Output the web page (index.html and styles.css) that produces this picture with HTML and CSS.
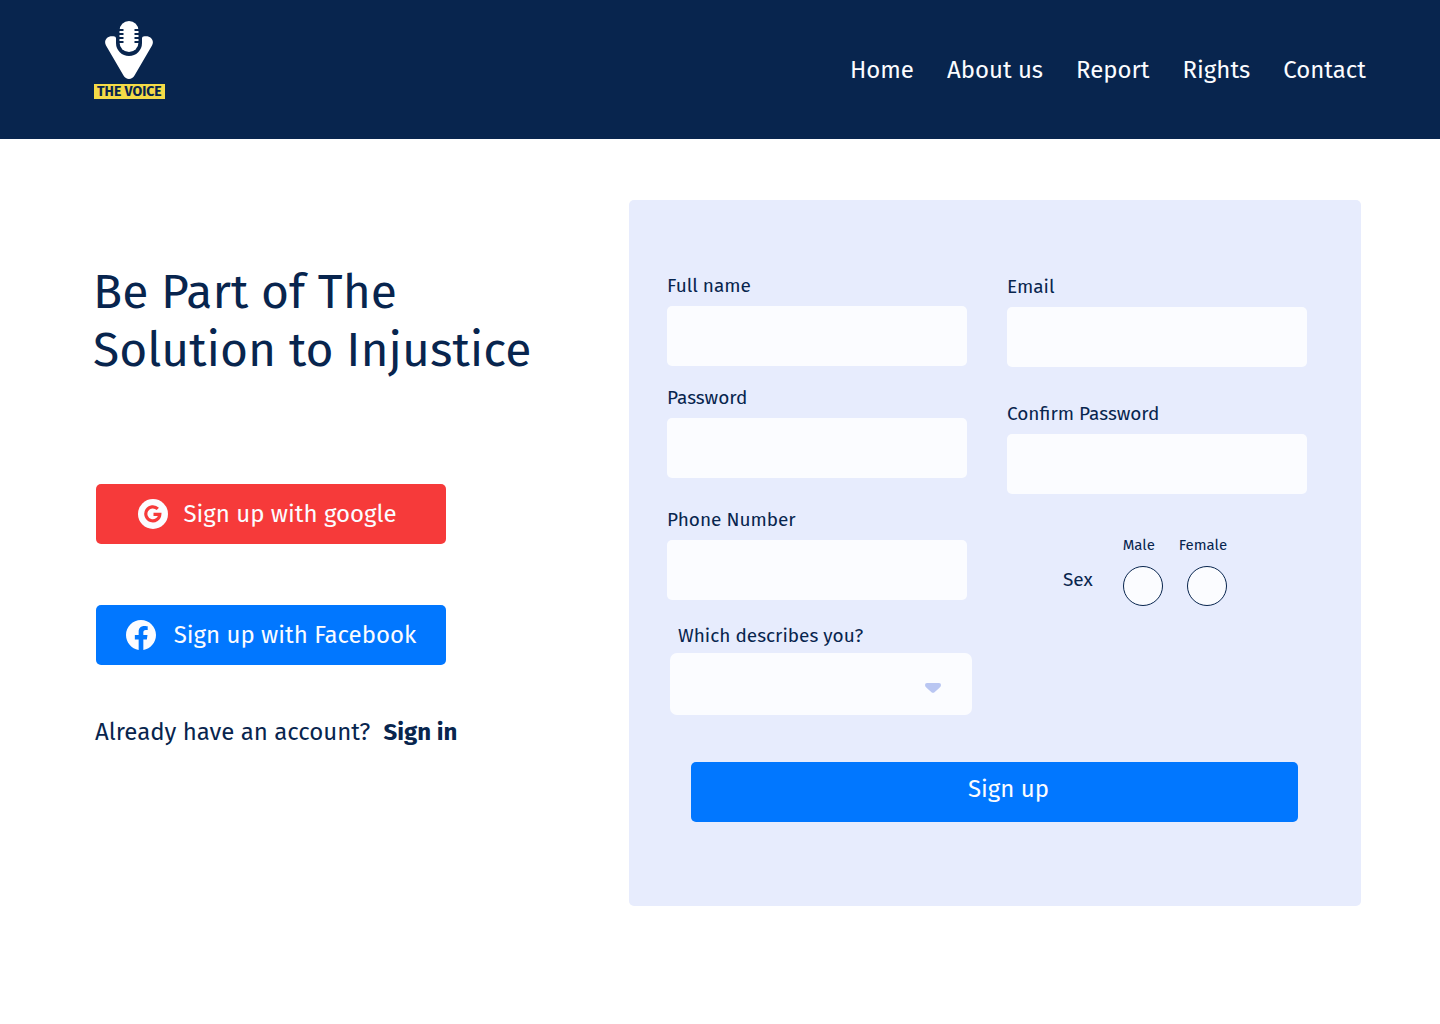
FILE: index.html
```html
<!DOCTYPE html>
<html lang="en">
<head>
<meta charset="utf-8">
<meta name="viewport" content="width=device-width, initial-scale=1">
<title>The Voice – Sign up</title>
<link rel="stylesheet" href="styles.css">
</head>
<body>
<header class="site-header">
  <a class="logo" href="#" aria-label="The Voice">
    <svg class="logo-mark" viewBox="0 0 48 58" aria-hidden="true">
      <path class="logo-white" d="M11 17.500C11 16 10 15.300 8.500 15.300H7C1.500 15.300-1.500 20 1 24.500L18.500 54.500C21 59 27 59 29.500 54.500L47 24.500C49.500 20 46.500 15.300 41 15.300H39.500C38 15.300 37 16 37 17.500V22A13 13 0 0 1 11 22Z"/>
      <rect class="logo-white" x="14.500" y="0" width="19" height="31" rx="9.500"/>
      <path class="logo-line" d="M14 9H18.500M14 13H18.500M14 17H18.500M14 21H18.500M29.500 9H34M29.500 13H34M29.500 17H34M29.500 21H34"/>
    </svg>
    <span class="logo-name">THE VOICE</span>
  </a>
  <nav class="site-nav">
    <a href="#">Home</a>
    <a href="#">About us</a>
    <a href="#">Report</a>
    <a href="#">Rights</a>
    <a href="#">Contact</a>
  </nav>
</header>
<main class="page">
  <section class="intro">
    <h1>Be Part of The<br>Solution to Injustice</h1>
    <div class="social">
      <button class="btn btn-google" type="button">
        <svg class="icon" viewBox="0 0 30 30" aria-hidden="true"><circle cx="15" cy="15" r="15" fill="#fbfcff"/><path d="M19.800 9.900A7 7 0 1 0 21.800 15.300H15.500" fill="none" stroke="#f63a3a" stroke-width="3.200"/></svg>
        Sign up with google
      </button>
      <button class="btn btn-facebook" type="button">
        <svg class="icon" viewBox="0 0 24 24" aria-hidden="true"><path fill="#fbfcff" d="M24 12.073C24 5.405 18.627 0 12 0S0 5.405 0 12.073C0 18.100 4.388 23.094 10.125 24v-8.437H7.078v-3.490h3.047V9.413c0-3.026 1.792-4.697 4.533-4.697 1.312 0 2.686.236 2.686.236v2.971h-1.513c-1.491 0-1.956.930-1.956 1.886v2.264h3.328l-.532 3.490h-2.796V24C19.612 23.094 24 18.100 24 12.073z"/></svg>
        Sign up with Facebook
      </button>
    </div>
    <p class="signin">Already have an account? <a href="#">Sign in</a></p>
  </section>
  <form class="card">
    <div class="columns">
      <div class="column">
        <div class="field"><label for="name">Full name</label><input id="name" type="text"></div>
        <div class="field"><label for="password">Password</label><input id="password" type="password"></div>
        <div class="field field-phone"><label for="phone">Phone Number</label><input id="phone" type="tel"></div>
        <div class="field field-role">
          <label for="role">Which describes you?</label>
          <div class="select">
            <select id="role"><option value=""></option></select>
            <svg class="caret" viewBox="0 0 16 10" aria-hidden="true"><path d="M2 0H14Q16 0 16 2Q16 3.500 14.500 4.800L9.500 9.200Q8 10.400 6.500 9.200L1.500 4.800Q0 3.500 0 2Q0 0 2 0Z" fill="#b9c6f2"/></svg>
          </div>
        </div>
      </div>
      <div class="column column-right">
        <div class="field"><label for="email">Email</label><input id="email" type="email"></div>
        <div class="field"><label for="confirm">Confirm Password</label><input id="confirm" type="password"></div>
        <fieldset class="sex" aria-labelledby="sex-label">
          <span class="sex-label" id="sex-label">Sex</span>
          <label class="choice">Male<input type="radio" name="sex" value="male"></label>
          <label class="choice choice-end">Female<input type="radio" name="sex" value="female"></label>
        </fieldset>
      </div>
    </div>
    <button class="btn btn-submit" type="submit">Sign up</button>
  </form>
</main>
</body>
</html>
```
FILE: styles.css
```css
* { box-sizing: border-box; }
body {
  margin: 0;
  background: #fff;
  color: #08254e;
  font-family: "Fira Sans", "Noto Sans", sans-serif;
  font-size: 19px;
  line-height: 24px;
}
a { color: inherit; text-decoration: none; }
button, input, select { font: inherit; color: inherit; border: 0; margin: 0; }

.site-header {
  display: flex;
  justify-content: space-between;
  align-items: center;
  padding: 21px 74px 40px 94px;
  background: #08254e;
}
.logo { display: flex; flex-direction: column; align-items: center; gap: 5px; }
.logo-mark { width: 48px; height: 58px; }
.logo-white { fill: #fff; }
.logo-line { stroke: #08254e; stroke-width: 2; }
.logo-name {
  padding: 1px 3px 0;
  background: #f4db47;
  color: #08254e;
  font-size: 14px;
  font-weight: 700;
  line-height: 14px;
}
.site-nav {
  display: flex;
  gap: 33px;
  padding-top: 20px;
  color: #fbfcff;
  font-size: 24px;
  line-height: 30px;
}

.page {
  display: grid;
  grid-template-columns: 536fr 732fr;
  align-items: start;
  padding: 61px 79px 80px 93px;
}
.intro { padding-top: 63px; }
h1 { margin: 0; font-size: 48px; font-weight: 400; line-height: 58px; }
.social { display: flex; flex-direction: column; gap: 61px; max-width: 350px; margin: 105px 0 0 3px; }
.btn {
  display: flex;
  align-items: center;
  justify-content: center;
  gap: 16px;
  height: 60px;
  padding: 0 10px;
  border-radius: 5px;
  color: #fbfcff;
  font-size: 24px;
  line-height: 30px;
  cursor: pointer;
}
.btn-google { padding-right: 18px; background: #f63a3a; }
.btn-facebook { gap: 18px; background: #0177ff; }
.icon { width: 30px; height: 30px; flex: none; }
.signin { margin: 52px 0 0 2px; font-size: 24px; line-height: 30px; }
.signin a { margin-left: 7px; font-weight: 700; }

.card { padding: 74px 54px 84px 38px; border-radius: 5px; background: #e7ecfd; }
.columns { display: grid; grid-template-columns: 1fr 1fr; gap: 40px; }
.column { display: flex; flex-direction: column; gap: 20px; }
.column-right { gap: 35px; padding-top: 1px; }
.field { display: flex; flex-direction: column; gap: 8px; }
.field input { width: 100%; height: 60px; padding: 0 16px; border-radius: 5px; background: #fbfcff; }
.field-phone { margin-top: 10px; }
.field-role { gap: 5px; margin: 4px -5px 0 3px; }
.field-role label { padding-left: 8px; }
.select { display: grid; align-items: center; }
.select > * { grid-area: 1 / 1; }
.select select { width: 100%; height: 62px; padding: 0 56px 0 16px; border-radius: 7px; background: #fbfcff; appearance: none; }
.caret { width: 16px; height: 10px; margin: 8px 31px 0 0; justify-self: end; pointer-events: none; }
.sex {
  display: flex;
  justify-content: center;
  align-items: flex-end;
  gap: 16px;
  margin: 6px 24px 0 0;
  padding: 0;
  border: 0;
}
.sex-label { padding: 0 14px 14px 0; }
.choice { display: flex; flex-direction: column; gap: 11px; font-size: 15px; line-height: 20px; }
.choice-end { align-items: flex-end; }
.choice input { width: 40px; height: 40px; margin: 0; appearance: none; border: 1px solid #08254e; border-radius: 50%; background: #fbfcff; }
.choice input:checked { box-shadow: inset 0 0 0 10px #fbfcff; background: #0177ff; }
.btn-submit { width: calc(100% - 33px); margin: 47px 9px 0 24px; padding: 0 0 6px 28px; background: #0177ff; }

@media (max-width: 1100px) {
  .page { grid-template-columns: 1fr; gap: 60px; }
}
```
